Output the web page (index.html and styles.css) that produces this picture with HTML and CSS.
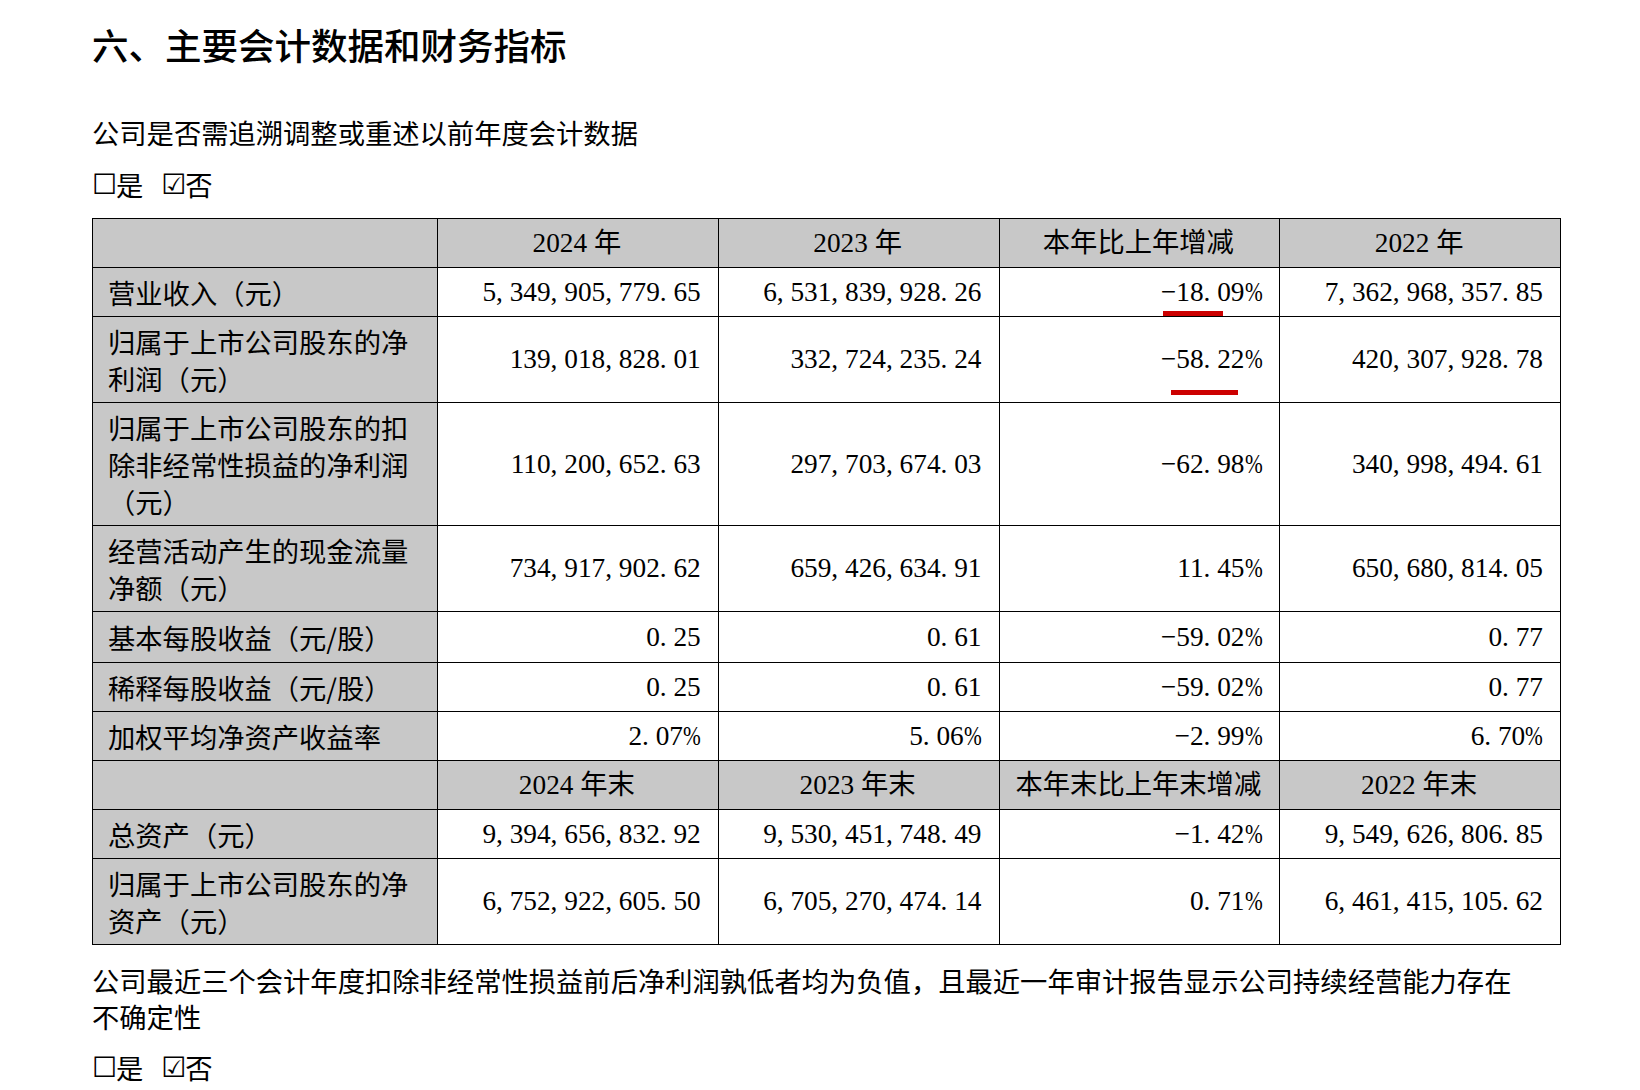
FILE: index.html
```html
<!DOCTYPE html>
<html lang="zh-CN">
<head>
<meta charset="utf-8">
<title>主要会计数据和财务指标</title>
<link rel="stylesheet" href="styles.css">
</head>
<body>
<div class="page">
  <h1 class="title">六、主要会计数据和财务指标</h1>
  <p class="para q1">公司是否需追溯调整或重述以前年度会计数据</p>
  <p class="para check"><span class="box">☐</span>是<span class="box box-2">☑</span>否</p>

  <table class="fin">
    <colgroup>
      <col class="c-label">
      <col class="c-val">
      <col class="c-val">
      <col class="c-val">
      <col class="c-val">
    </colgroup>
    <tr class="head">
      <td class="label"></td>
      <td class="yr">2024 年</td>
      <td class="yr">2023 年</td>
      <td class="yr">本年比上年增减</td>
      <td class="yr">2022 年</td>
    </tr>
    <tr>
      <td class="label">营业收入（元）</td>
      <td class="num">5, 349, 905, 779. 65</td>
      <td class="num">6, 531, 839, 928. 26</td>
      <td class="num marked">−18. 09<span class="pct">%</span><span class="mark mark-a"></span></td>
      <td class="num">7, 362, 968, 357. 85</td>
    </tr>
    <tr>
      <td class="label">归属于上市公司股东的净利润（元）</td>
      <td class="num">139, 018, 828. 01</td>
      <td class="num">332, 724, 235. 24</td>
      <td class="num marked">−58. 22<span class="pct">%</span><span class="mark mark-b"></span></td>
      <td class="num">420, 307, 928. 78</td>
    </tr>
    <tr>
      <td class="label">归属于上市公司股东的扣除非经常性损益的净利润（元）</td>
      <td class="num">110, 200, 652. 63</td>
      <td class="num">297, 703, 674. 03</td>
      <td class="num">−62. 98<span class="pct">%</span></td>
      <td class="num">340, 998, 494. 61</td>
    </tr>
    <tr>
      <td class="label">经营活动产生的现金流量净额（元）</td>
      <td class="num">734, 917, 902. 62</td>
      <td class="num">659, 426, 634. 91</td>
      <td class="num">11. 45<span class="pct">%</span></td>
      <td class="num">650, 680, 814. 05</td>
    </tr>
    <tr class="tall">
      <td class="label">基本每股收益（元/股）</td>
      <td class="num">0. 25</td>
      <td class="num">0. 61</td>
      <td class="num">−59. 02<span class="pct">%</span></td>
      <td class="num">0. 77</td>
    </tr>
    <tr>
      <td class="label">稀释每股收益（元/股）</td>
      <td class="num">0. 25</td>
      <td class="num">0. 61</td>
      <td class="num">−59. 02<span class="pct">%</span></td>
      <td class="num">0. 77</td>
    </tr>
    <tr>
      <td class="label">加权平均净资产收益率</td>
      <td class="num">2. 07<span class="pct">%</span></td>
      <td class="num">5. 06<span class="pct">%</span></td>
      <td class="num">−2. 99<span class="pct">%</span></td>
      <td class="num">6. 70<span class="pct">%</span></td>
    </tr>
    <tr class="head">
      <td class="label"></td>
      <td class="yr">2024 年末</td>
      <td class="yr">2023 年末</td>
      <td class="yr">本年末比上年末增减</td>
      <td class="yr">2022 年末</td>
    </tr>
    <tr>
      <td class="label">总资产（元）</td>
      <td class="num">9, 394, 656, 832. 92</td>
      <td class="num">9, 530, 451, 748. 49</td>
      <td class="num">−1. 42<span class="pct">%</span></td>
      <td class="num">9, 549, 626, 806. 85</td>
    </tr>
    <tr>
      <td class="label">归属于上市公司股东的净资产（元）</td>
      <td class="num">6, 752, 922, 605. 50</td>
      <td class="num">6, 705, 270, 474. 14</td>
      <td class="num">0. 71<span class="pct">%</span></td>
      <td class="num">6, 461, 415, 105. 62</td>
    </tr>
  </table>

  <p class="para note">公司最近三个会计年度扣除非经常性损益前后净利润孰低者均为负值，且最近一年审计报告显示公司持续经营能力存在<br>不确定性</p>
  <p class="para check check-last"><span class="box">☐</span>是<span class="box box-2">☑</span>否</p>
</div>
</body>
</html>
```

FILE: styles.css
```css
html, body {
  margin: 0;
  padding: 0;
  background: #ffffff;
  color: #000000;
}

body {
  font-family: "Noto Sans CJK SC", sans-serif;
}

.page {
  padding: 20px 0 0 92px;
}

.title {
  margin: 0;
  font-size: 36.5px;
  line-height: 50px;
  font-weight: 500;
}

.para {
  margin: 0;
  font-size: 27.3px;
  line-height: 37px;
  font-weight: 400;
}

.q1 {
  margin-top: 44px;
}

.check {
  margin-top: 15px;
  height: 37px;
  display: flex;
  align-items: center;
}

.box {
  font-family: "DejaVu Sans", sans-serif;
  font-size: 28px;
  line-height: 37px;
  width: 24px;
  flex: none;
}

.box-2 {
  margin-left: 18px;
}

.fin {
  margin-top: 15px;
  border-collapse: collapse;
  table-layout: fixed;
  width: 1468px;
  font-size: 27.3px;
  line-height: 37px;
}

.c-label {
  width: 345px;
}

.c-val {
  width: 280.75px;
}

.fin td {
  border: 1px solid #000000;
  padding: 5.5px 17px 5.5px 15px;
  vertical-align: middle;
}

.fin .tall td {
  padding-top: 6.5px;
  padding-bottom: 6.5px;
}

.fin .label {
  background: #c8c8c8;
  text-align: left;
}

.fin .yr {
  background: #c8c8c8;
  text-align: center;
  font-family: "Liberation Serif", "Noto Sans CJK SC", serif;
  white-space: nowrap;
}

.fin .num {
  text-align: right;
  font-family: "Liberation Serif", "Noto Sans CJK SC", serif;
  white-space: pre;
}

.pct {
  display: inline-block;
  transform: scaleX(0.78);
  transform-origin: right center;
  margin-left: -5px;
}

.marked {
  position: relative;
}

.mark {
  position: absolute;
  height: 5px;
  background: #cc0000;
}

.mark-a {
  right: 56px;
  width: 60px;
  bottom: 0;
}

.mark-b {
  right: 41px;
  width: 67px;
  bottom: 7px;
}

.note {
  margin-top: 17px;
  line-height: 36px;
}

.check-last {
  margin-top: 15px;
}
```
